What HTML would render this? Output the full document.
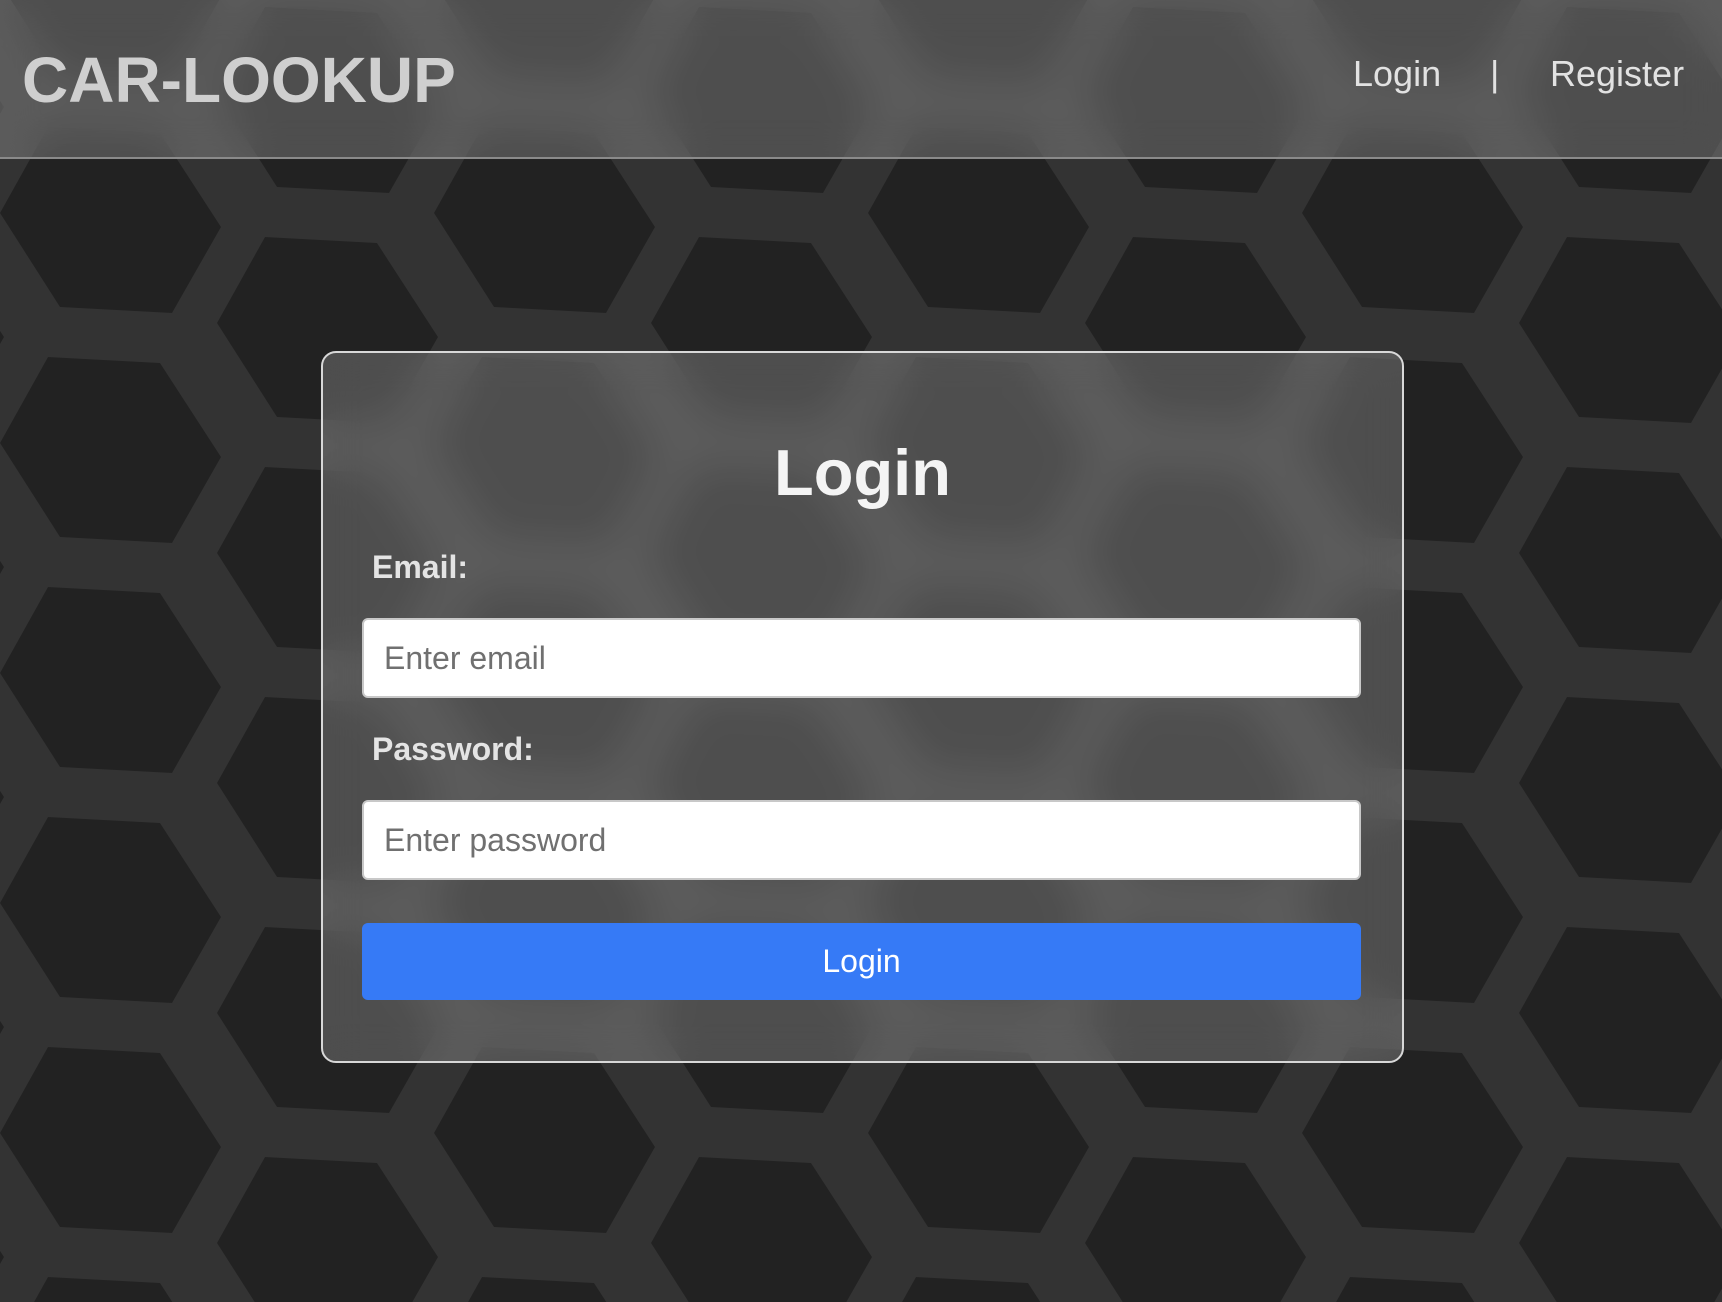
<!DOCTYPE html>
<html><head><meta charset="utf-8"><style>
html,body{margin:0;padding:0;width:1722px;height:1302px;overflow:hidden;background:#333;font-family:"Liberation Sans",Arial,sans-serif}
svg.bg{position:absolute;left:0;top:0}
.hdr{position:absolute;left:0;top:0;width:1722px;height:157px;background:rgba(255,255,255,0.2);backdrop-filter:blur(20px);-webkit-backdrop-filter:blur(20px);border-bottom:2px solid #8a8a8a}
.t{position:absolute;white-space:nowrap;line-height:1}
.card{position:absolute;left:321px;top:351px;width:1083px;height:712px;border:2px solid #d8d8d8;border-radius:15px;background:rgba(255,255,255,0.2);backdrop-filter:blur(20px);-webkit-backdrop-filter:blur(20px);box-sizing:border-box}
.inp{position:absolute;left:362px;width:999px;height:80px;background:#fff;border:2px solid #c8c8c8;border-radius:6px;box-sizing:border-box}
.btn{position:absolute;left:362px;top:923px;width:999px;height:77px;background:#367af6;border-radius:6px}
</style></head><body>
<svg class="bg" width="1722" height="1302" xmlns="http://www.w3.org/2000/svg">
<defs>
<polygon id="h" points="48,0 160,6 221,100 172,186 60,180 0,86" fill="#222"/>
<pattern id="p" x="0" y="127" width="434" height="230" patternUnits="userSpaceOnUse">
<use href="#h" x="0" y="0"/><use href="#h" x="0" y="-230"/>
<use href="#h" x="434" y="0"/><use href="#h" x="434" y="-230"/>
<use href="#h" x="217" y="110"/><use href="#h" x="217" y="-120"/>
<use href="#h" x="-217" y="110"/><use href="#h" x="-217" y="-120"/>
</pattern></defs>
<rect width="1722" height="1302" fill="#333"/>
<rect width="1722" height="1302" fill="url(#p)"/>
</svg>
<div class="hdr"></div>
<div class="t" style="left:22px;top:48px;font-size:64px;font-weight:bold;color:#cfcfcf">CAR-LOOKUP</div>
<div class="t" style="left:1353px;top:56px;font-size:36px;color:#e2e2e2">Login</div>
<div class="t" style="left:1490px;top:56px;font-size:36px;color:#e2e2e2">|</div>
<div class="t" style="left:1550px;top:56px;font-size:36px;color:#e2e2e2">Register</div>
<div class="card"></div>
<div class="t" style="left:321px;width:1083px;text-align:center;top:440px;font-size:65px;font-weight:bold;color:#f4f4f4">Login</div>
<div class="t" style="left:372px;top:551px;font-size:32px;font-weight:bold;color:#e4e4e4">Email:</div>
<div class="inp" style="top:618px"></div>
<div class="t" style="left:384px;top:642px;font-size:32px;color:#707070">Enter email</div>
<div class="t" style="left:372px;top:733px;font-size:32px;font-weight:bold;color:#e4e4e4">Password:</div>
<div class="inp" style="top:800px"></div>
<div class="t" style="left:384px;top:824px;font-size:32px;color:#707070">Enter password</div>
<div class="btn"></div>
<div class="t" style="left:362px;width:999px;text-align:center;top:945px;font-size:32px;color:#fff">Login</div>
</body></html>
